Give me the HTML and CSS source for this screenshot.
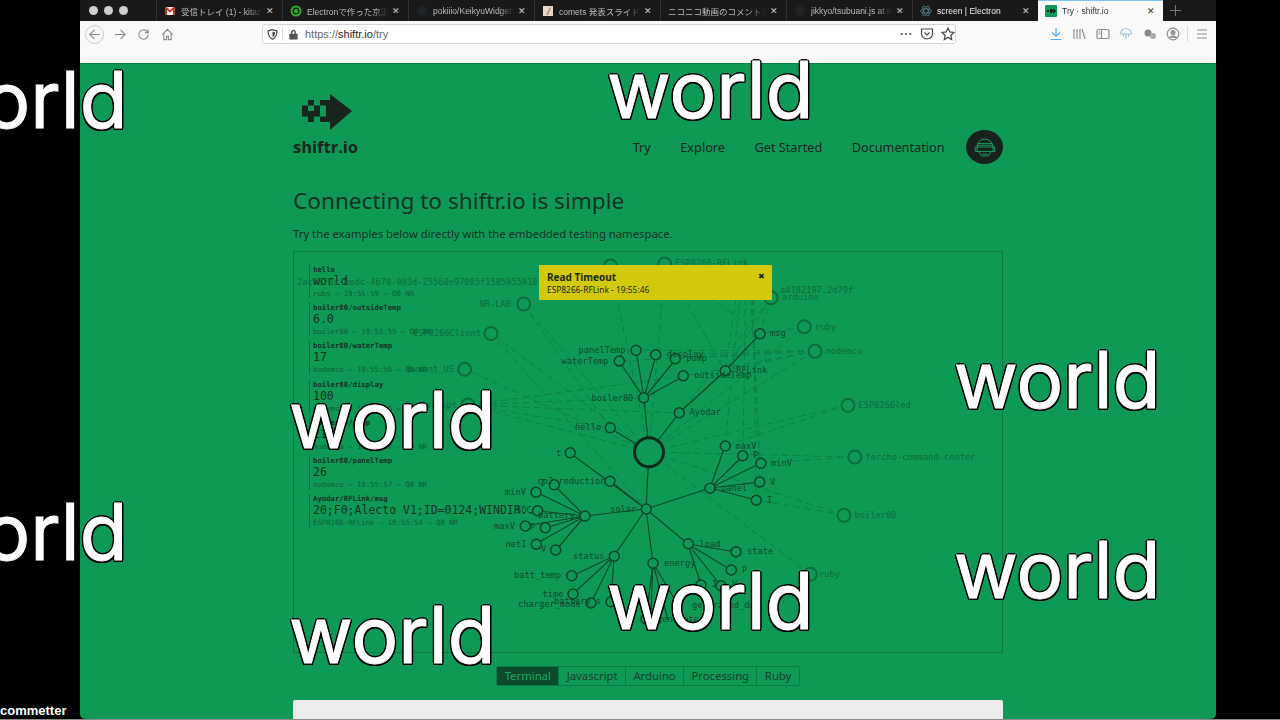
FILE: index.html
```html
<!DOCTYPE html>
<html lang="en">
<head>
  <meta charset="UTF-8">
  <title>Try · shiftr.io</title>
  <link rel="stylesheet" href="styles.css">
</head>
<body>
  <div class="window">
    <!-- tab strip -->
    <div class="tabstrip">
      <div class="lights"><span></span><span></span><span></span></div>
      <div class="tab">
        <svg class="favicon" viewBox="0 0 12 12"><rect x="1" y="2" width="10" height="8" fill="#eee"/><path d="M1 2v8h2V5l3 2.500L9 5v5h2V2H9.500L6 5 2.500 2z" fill="#c5392c"/></svg>
        <span class="tab-title">受信トレイ (1) - kitazaki</span><span class="tab-close">✕</span>
      </div>
      <div class="tab">
        <svg class="favicon" viewBox="0 0 12 12"><circle cx="6" cy="6" r="5.500" fill="#35a82c"/><circle cx="6" cy="6" r="2.800" fill="none" stroke="#111" stroke-width="1.200"/></svg>
        <span class="tab-title">Electronで作った京浜急行</span><span class="tab-close">✕</span>
      </div>
      <div class="tab">
        <svg class="favicon" viewBox="0 0 12 12"><circle cx="6" cy="6" r="5" fill="#1f2328"/></svg>
        <span class="tab-title">pokiiio/KeikyuWidget: A</span><span class="tab-close">✕</span>
      </div>
      <div class="tab">
        <svg class="favicon" viewBox="0 0 12 12"><rect x="1" y="1" width="10" height="10" fill="#e8d9cf"/><path d="M4 10 8 2l1 1-3 7z" fill="#c08a78"/></svg>
        <span class="tab-title">comets 発表スライド用の</span><span class="tab-close">✕</span>
      </div>
      <div class="tab tab-nofav">
        <span class="tab-title">ニコニコ動画のコメントを見</span><span class="tab-close">✕</span>
      </div>
      <div class="tab">
        <svg class="favicon" viewBox="0 0 12 12"><circle cx="6" cy="6" r="5" fill="#1f2328"/></svg>
        <span class="tab-title">jikkyo/tsubuani.js at ma</span><span class="tab-close">✕</span>
      </div>
      <div class="tab tab-loud">
        <svg class="favicon" viewBox="0 0 12 12" fill="none" stroke="#5d8f9c" stroke-width=".7"><ellipse cx="6" cy="6" rx="5.500" ry="2.200"/><ellipse cx="6" cy="6" rx="5.500" ry="2.200" transform="rotate(60 6 6)"/><ellipse cx="6" cy="6" rx="5.500" ry="2.200" transform="rotate(120 6 6)"/></svg>
        <span class="tab-title">screen | Electron</span><span class="tab-close">✕</span>
      </div>
      <div class="tab tab-active">
        <svg class="favicon" viewBox="0 0 12 12"><rect width="12" height="12" rx="1" fill="#0f9956"/><path d="M2 5h2v2H2zM5 4h2v1h1V3l3 3-3 3V7H7v1H5z" fill="#16261c"/></svg>
        <span class="tab-title">Try · shiftr.io</span><span class="tab-close">✕</span>
      </div>
      <div class="newtab">
        <svg viewBox="0 0 11 11" width="11" height="11"><path d="M5.500 0v11M0 5.500h11" stroke="#777" stroke-width="1"/></svg>
      </div>
    </div>

    <!-- toolbar -->
    <div class="toolbar">
      <div class="tools">
        <span class="backbtn">
          <svg viewBox="0 0 14 14" width="13" height="13" class="ico"><path d="M13 7H2M7 2 2 7l5 5"/></svg>
        </span>
        <svg viewBox="0 0 14 14" width="13" height="13" class="ico"><path d="M1 7h11M7 2l5 5-5 5"/></svg>
        <svg viewBox="0 0 14 14" width="13" height="13" class="ico ico-reload"><path d="M12 7a5 5 0 1 1-1.500-3.500L12 5V1.500M12 5H8.500"/></svg>
        <svg viewBox="0 0 14 14" width="13" height="13" class="ico ico-home"><path d="M1.500 7 7 1.500 12.500 7M3 6v6.500h3V9h2v3.500h3V6"/></svg>
      </div>
      <div class="urlbar">
        <svg viewBox="0 0 12 12" width="11" height="11" class="url-shield"><path d="M6 .8 10.800 2c0 4.800-1.200 7.600-4.800 9.200C2.400 9.600 1.200 6.800 1.200 2z" fill="none" stroke="#444" stroke-width="1.300"/><path d="M6 3 8.800 3.600C8.700 6.200 8 8 6 9z" fill="#444"/></svg>
        <span class="url-sep"></span>
        <svg viewBox="0 0 12 12" width="11" height="11" class="url-lock"><path d="M2 5.500h8V11H2zM3.800 5.500V3.500a2.200 2.200 0 0 1 4.400 0v2" fill="#555" stroke="#555"/><path d="M5 5.500V3.500a1 1 0 0 1 2 0v2" fill="#fff"/></svg>
        <span class="url-text">https://<b>shiftr.io</b>/try</span>
        <span class="url-end">
          <svg viewBox="0 0 14 4" width="12" height="4"><circle cx="2" cy="2" r="1.300" fill="#555"/><circle cx="7" cy="2" r="1.300" fill="#555"/><circle cx="12" cy="2" r="1.300" fill="#555"/></svg>
          <svg viewBox="0 0 14 14" width="14" height="14" class="ico ico-dark"><path d="M1.500 2h11v4.500a5.500 5.500 0 0 1-11 0zM4.500 5.500 7 8l2.500-2.500"/></svg>
          <svg viewBox="0 0 14 14" width="14" height="14" class="ico ico-dark"><path d="m7 1 1.800 3.900 4.200.5-3.100 2.900.8 4.200L7 10.400l-3.700 2.100.8-4.200L1 5.400l4.200-.5z"/></svg>
        </span>
      </div>
      <div class="tools tools-right">
        <svg viewBox="0 0 14 14" width="14" height="14" class="ico ico-blue"><path d="M7 1v8M3 5.500 7 9.500l4-4M1.500 12.500h11"/></svg>
        <svg viewBox="0 0 14 14" width="14" height="14" class="ico"><path d="M2 2v10M5 2v10M8 2v10M10 2l3 10"/></svg>
        <svg viewBox="0 0 14 14" width="14" height="14" class="ico"><rect x="1" y="2.500" width="12" height="9" rx="1.500"/><path d="M5.500 2.500v9M2.500 5H4M2.500 7H4"/></svg>
        <svg viewBox="0 0 14 14" width="14" height="14" class="ico ico-pale"><path d="M1.500 7a5.500 5.500 0 0 1 11 0zM4.500 7v3M7 7v5M9.500 7v3"/></svg>
        <svg viewBox="0 0 14 14" width="14" height="14"><circle cx="5" cy="6" r="3.500" fill="#888"/><circle cx="10" cy="9" r="3" fill="#aaa"/></svg>
        <svg viewBox="0 0 14 14" width="14" height="14" class="ico"><circle cx="7" cy="7" r="5.800"/><circle cx="7" cy="5.500" r="2" fill="#999"/><path d="M3.500 11c1-2.500 6-2.500 7 0" fill="#999"/></svg>
        <span class="tool-sep"></span>
        <svg viewBox="0 0 14 14" width="14" height="14" class="ico"><path d="M2 3h10M2 7h10M2 11h10"/></svg>
      </div>
    </div>

    <!-- page -->
    <main class="page">
      <div class="content">
        <header class="site-header">
          <div class="brand">
            <svg class="logo" viewBox="302 94 50 36" width="50" height="36">
              <path d="M330 94l22 17-22 19zM308 100h6v5.500h-6zM320 100h10v5.500h-10zM302 105.500h6v5.500h-6zM314 105.500h6v5.500h-6zM326 105.500h4v5.500h-4zM302 111h18v5.500h-18zM326 111h4v5.500h-4zM308 116.500h6v5.500h-6zM320 116.500h10v5.500h-10z" fill="#16261c"/>
            </svg>
            <div class="brand-name">shiftr.io</div>
          </div>
          <nav class="nav">
            <a>Try</a>
            <a>Explore</a>
            <a>Get Started</a>
            <a>Documentation</a>
            <span class="avatar">
              <svg viewBox="0 0 36 36" width="34" height="32" fill="none" stroke="#1aa862" stroke-width="1">
                <path d="M9 18a9 9 0 0 1 18 0M9 18h18v5H9zM10 14h16M9.500 16h17M11 23l3 5h8l3-5M15 26h6"/>
                <path d="M9 18H7v5h2M27 18h2v5h-2"/>
              </svg>
            </span>
          </nav>
        </header>

        <h1>Connecting to shiftr.io is simple</h1>
        <p class="lead">Try the examples below directly with the embedded testing namespace.</p>

        <div class="graph">
          <svg class="graph-svg" viewBox="293 252 708 400" width="708" height="400">
            <!-- connections between clients and topics -->
            <g class="link-dim">
              <path d="M648 452 522 304M648 452 490 333M648 452 464 369M648 452 467 405M648 452 664 264M648 452 609 265M648 452 770 298M648 452 803 327M648 452 814 351M648 452 847 405M648 452 854 457M648 452 843 515"/>
              <path d="M467 405 643 398M467 405 678 413M467 405 609 428M467 405 683 376"/>
              <path d="M814 351 635 350M814 351 655 355M814 351 675 359M814 351 618 361M814 351 683 376M814 351 724 371"/>
              <path d="M664 264 724 371M664 264 759 334M745 265 742 456M742 265 724 446M748 265 759 463M750 265 759 482M752 265 755 500M740 265 724 371"/>
              <path d="M770 298 759 334M770 298 724 371M803 327 759 334"/>
              <path d="M522 304 609 428M490 333 645 509M847 405 724 446M854 457 760 463M843 515 755 500M809 574 648 452"/>
            </g>
            <!-- topic tree -->
            <g class="link">
              <path d="M648 452 643 398M648 452 609 428M648 452 678 413M678 413 724 371 759 334"/>
              <path d="M643 398 635 350M643 398 655 355M643 398 675 359M643 398 618 361M643 398 683 376"/>
              <path d="M648 452 645 509M645 509 569 453M645 509 609 481M645 509 709 488M645 509 584 516M645 509 613 556M645 509 652 563M645 509 687 544"/>
              <path d="M709 488 724 446M709 488 742 456M709 488 760 463M709 488 759 482M709 488 755 500"/>
              <path d="M584 516 553 485M584 516 535 492M584 516 537 511M584 516 524 526M584 516 544 528M584 516 535 544M584 516 555 550"/>
              <path d="M613 556 571 576M613 556 572 594M613 556 590 603M613 556 610 602"/>
              <path d="M652 563 645 619M652 563 650 610M652 563 667 620M652 563 680 610"/>
              <path d="M687 544 735 552M687 544 730 570M687 544 700 585M687 544 720 586"/>
            </g>
            <!-- clients -->
            <g class="node-dim">
              <circle cx="522.700" cy="304" r="6.500"/>
              <circle cx="490" cy="333.500" r="6.500"/>
              <circle cx="463.700" cy="369.300" r="6.500"/>
              <circle cx="467" cy="405" r="6.500"/>
              <circle cx="609.500" cy="266" r="6.500"/>
              <circle cx="663.700" cy="264" r="6.500"/>
              <circle cx="770" cy="297.700" r="6.500"/>
              <circle cx="803.300" cy="326.700" r="6.500"/>
              <circle cx="814" cy="351.300" r="6.500"/>
              <circle cx="847" cy="405.300" r="6.500"/>
              <circle cx="853.800" cy="457" r="6.500"/>
              <circle cx="843" cy="515.300" r="6.500"/>
              <circle cx="809.300" cy="574.300" r="6.500"/>
            </g>
            <g class="label-dim">
              <text x="510" y="306.500" text-anchor="end">NR-LAB</text>
              <text x="480" y="336" text-anchor="end">ESP8266Client</text>
              <text x="453" y="372" text-anchor="end">bwaant_US</text>
              <text x="456" y="408" text-anchor="end">Javascript</text>
              <text x="296" y="284.500">2ac48f3c-6edc-4670-983d-25560e97085f1585855818</text>
              <text x="674" y="266">ESP8266-RFLink</text>
              <text x="779" y="293">a4182197.2d79f</text>
              <text x="781" y="300">arduino</text>
              <text x="814" y="329.500">ruby</text>
              <text x="824.500" y="354">nodemcu</text>
              <text x="857.500" y="408">ESP8266led</text>
              <text x="864.500" y="459.500">fercho-command-center</text>
              <text x="853.500" y="518">boiler80</text>
              <text x="818" y="576.500">ruby</text>
            </g>
            <!-- topics -->
            <circle class="node-root" cx="648" cy="452.300" r="14.500"/>
            <g class="node">
              <circle cx="642.700" cy="397.700" r="5"/>
              <circle cx="635" cy="350.300" r="5"/>
              <circle cx="654.700" cy="354.700" r="5"/>
              <circle cx="674.300" cy="358.700" r="5"/>
              <circle cx="618.300" cy="361" r="5"/>
              <circle cx="682.300" cy="375.700" r="5"/>
              <circle cx="724.300" cy="370.700" r="5"/>
              <circle cx="759" cy="333.700" r="5"/>
              <circle cx="678.300" cy="412.700" r="5"/>
              <circle cx="609.300" cy="427.700" r="5"/>
              <circle cx="569.300" cy="452.700" r="5"/>
              <circle cx="609" cy="481.300" r="5"/>
              <circle cx="645.300" cy="509" r="5"/>
              <circle cx="709" cy="488.300" r="5"/>
              <circle cx="724.300" cy="446" r="5"/>
              <circle cx="741.700" cy="455.700" r="5"/>
              <circle cx="760" cy="463.300" r="5"/>
              <circle cx="758.700" cy="482" r="5"/>
              <circle cx="755.300" cy="500.300" r="5"/>
              <circle cx="584" cy="516" r="5"/>
              <circle cx="553.300" cy="484.700" r="5"/>
              <circle cx="535" cy="492.300" r="5"/>
              <circle cx="536.700" cy="510.700" r="5"/>
              <circle cx="524.300" cy="526" r="5"/>
              <circle cx="544.300" cy="527.700" r="5"/>
              <circle cx="535.300" cy="544.300" r="5"/>
              <circle cx="554.700" cy="550" r="5"/>
              <circle cx="613.300" cy="556.300" r="5"/>
              <circle cx="570.700" cy="575.700" r="5"/>
              <circle cx="572" cy="594" r="5"/>
              <circle cx="590" cy="603" r="5"/>
              <circle cx="610" cy="601.700" r="5"/>
              <circle cx="652" cy="563.300" r="5"/>
              <circle cx="687.300" cy="543.700" r="5"/>
              <circle cx="735" cy="551.700" r="5"/>
              <circle cx="730.300" cy="570" r="5"/>
              <circle cx="700" cy="585" r="5"/>
              <circle cx="720" cy="585.700" r="5"/>
              <circle cx="645" cy="619" r="5"/>
            </g>
            <g class="label">
              <text x="590.500" y="400.500">boiler80</text>
              <text x="577.500" y="353">panelTemp</text>
              <text x="560.500" y="363.500">waterTemp</text>
              <text x="666" y="356.500">display</text>
              <text x="685" y="361">pump</text>
              <text x="693" y="378">outsideTemp</text>
              <text x="735" y="373">RFLink</text>
              <text x="769" y="335.500">msg</text>
              <text x="688.500" y="415">Ayodar</text>
              <text x="574" y="430">hello</text>
              <text x="555" y="455.500">t</text>
              <text x="536.500" y="484">co2 reduction</text>
              <text x="609" y="511.500">solar</text>
              <text x="720" y="490.500">panel</text>
              <text x="734.500" y="449">maxV</text>
              <text x="752" y="458">P</text>
              <text x="770" y="465.500">minV</text>
              <text x="769" y="484.500">V</text>
              <text x="766" y="503">I</text>
              <text x="537" y="518">battery</text>
              <text x="539" y="486">I</text>
              <text x="504" y="495">minV</text>
              <text x="515" y="513">SOC</text>
              <text x="493" y="528.500">maxV</text>
              <text x="529" y="530">P</text>
              <text x="504.500" y="547">netI</text>
              <text x="540" y="552">V</text>
              <text x="572" y="558.500">status</text>
              <text x="513" y="578">batt_temp</text>
              <text x="541.500" y="597">time</text>
              <text x="517" y="606.500">charger_mode</text>
              <text x="553" y="604">battery_s</text>
              <text x="663" y="566">energy</text>
              <text x="698.500" y="546.500">load</text>
              <text x="746" y="554">state</text>
              <text x="741" y="572.500">P</text>
              <text x="711" y="587">I</text>
              <text x="731" y="587">V</text>
              <text x="691" y="608">generated_da</text>
              <text x="656" y="621.500">generated</text>
            </g>
          </svg>

          <!-- incoming messages -->
          <div class="feed">
            <div class="msg"><div class="msg-topic">hello</div><div class="msg-value">world</div><div class="msg-meta">ruby – 19:55:59 – Q0 NR</div></div>
            <div class="msg"><div class="msg-topic">boiler80/outsideTemp</div><div class="msg-value">6.0</div><div class="msg-meta">boiler80 – 19:55:55 – Q0 NR</div></div>
            <div class="msg"><div class="msg-topic">boiler80/waterTemp</div><div class="msg-value">17</div><div class="msg-meta">nodemcu – 19:55:56 – Q0 NR</div></div>
            <div class="msg"><div class="msg-topic">boiler80/display</div><div class="msg-value">100</div><div class="msg-meta">nodemcu – 19:55:56 – Q0 NR</div></div>
            <div class="msg"><div class="msg-topic">boiler80/pump</div><div class="msg-value">21</div><div class="msg-meta">nodemcu – 19:55:57 – Q0 NR</div></div>
            <div class="msg"><div class="msg-topic">boiler80/panelTemp</div><div class="msg-value">26</div><div class="msg-meta">nodemcu – 19:55:57 – Q0 NR</div></div>
            <div class="msg"><div class="msg-topic">Ayodar/RFLink/msg</div><div class="msg-value">20;F0;Alecto V1;ID=0124;WINDIR..</div><div class="msg-meta">ESP8266-RFLink – 19:55:54 – Q0 NR</div></div>
          </div>

          <div class="toast">
            <span class="toast-close">✖</span>
            <div class="toast-title">Read Timeout</div>
            <div class="toast-text">ESP8266-RFLink - 19:55:46</div>
          </div>
        </div>

        <div class="tabs">
          <span class="tabs-item tabs-on">Terminal</span>
          <span class="tabs-item">Javascript</span>
          <span class="tabs-item">Arduino</span>
          <span class="tabs-item">Processing</span>
          <span class="tabs-item">Ruby</span>
        </div>

        <div class="codebox"></div>
      </div>
    </main>
  </div>

  <!-- floating comments on top of everything -->
  <div class="danmaku d1">world</div>
  <div class="danmaku d2">world</div>
  <div class="danmaku d3">world</div>
  <div class="danmaku d4">world</div>
  <div class="danmaku d5">world</div>
  <div class="danmaku d6">world</div>
  <div class="danmaku d7">world</div>
  <div class="danmaku d8">world</div>
  <div class="caption">commetter</div>
</body>
</html>
```

FILE: styles.css
```css
html, body {
  height: 100%;
  margin: 0;
  padding: 0;
  background: #000;
  font-family: "Noto Sans", sans-serif;
  overflow: hidden;
}
body {
  box-sizing: border-box;
  border-bottom: 1px solid #8a8a8a;
}
.window {
  display: flex;
  flex-direction: column;
  width: 1136px;
  height: 719px;
  margin-left: 80px;
  border-radius: 0 0 5px 5px;
  overflow: hidden;
}

/* tab strip */
.tabstrip {
  display: flex;
  height: 21px;
  background: #191919;
  color: #bbb;
  font-size: 8.500px;
  font-family: "Liberation Sans", "Noto Sans CJK JP", sans-serif;
  flex: none;
}
.lights {
  display: flex;
  gap: 6px;
  width: 76px;
  padding: 6px 0 0 9px;
  box-sizing: border-box;
}
.lights span {
  width: 9px;
  height: 9px;
  border-radius: 50%;
  background: #cfcfcf;
}
.tab {
  display: flex;
  align-items: center;
  width: 126px;
  padding: 0 7px;
  box-sizing: border-box;
  border-left: 1px solid #333;
  flex: none;
}
.favicon {
  width: 12px;
  height: 12px;
  margin-right: 5px;
  flex: none;
}
.tab-title {
  flex: 1;
  white-space: nowrap;
  overflow: hidden;
  -webkit-mask-image: linear-gradient(to right, #000 82%, transparent);
  mask-image: linear-gradient(to right, #000 82%, transparent);
}
.tab-close {
  width: 10px;
  margin-left: 3px;
  font-size: 9px;
  color: #ccc;
  text-align: center;
}
.tab-loud .tab-title {
  color: #eee;
}
.tab-active {
  background: #f9f9fa;
  color: #333;
  border-left: 0;
  border-top: 1px solid #7dc8f5;
  width: 125px;
}
.tab-active .tab-close {
  color: #333;
}
.newtab {
  display: flex;
  align-items: center;
  padding-left: 7px;
}

/* toolbar */
.toolbar {
  display: flex;
  align-items: flex-start;
  height: 42px;
  background: #f9f9fa;
  flex: none;
  box-sizing: border-box;
  padding-top: 3px;
}
.tools {
  display: flex;
  align-items: center;
  gap: 10.500px;
  height: 20px;
  width: 182px;
  padding-left: 5px;
  box-sizing: border-box;
}
.tools-right {
  flex: 1;
  width: auto;
  gap: 9.500px;
  padding-left: 0;
  justify-content: flex-end;
  padding-right: 7px;
}
.backbtn {
  display: flex;
  align-items: center;
  justify-content: center;
  width: 19px;
  height: 19px;
  border: 1px solid #ccc;
  border-radius: 50%;
  box-sizing: border-box;
  margin-right: -1px;
}
.ico {
  fill: none;
  stroke: #8e8e90;
  stroke-width: 1.200;
}
.ico-dark {
  stroke: #444;
}
.ico-blue {
  stroke: #57a9ec;
}
.ico-pale {
  stroke: #a6c6d8;
}
.tool-sep {
  width: 1px;
  height: 16px;
  background: #ddd;
  margin: 0 -2px 0 -3px;
}
.urlbar {
  display: flex;
  align-items: center;
  width: 694px;
  height: 20px;
  background: #fff;
  border: 1px solid #d4d4d4;
  border-radius: 3px;
  box-sizing: border-box;
  padding: 0 0 0 4px;
  font-family: "Liberation Sans", sans-serif;
  font-size: 11px;
  color: #666;
  margin-right: 6px;
}
.url-sep {
  width: 1px;
  height: 14px;
  background: #ddd;
  margin: 0 5px 0 4px;
}
.url-text {
  margin-left: 6px;
  flex: 1;
}
.url-text b {
  font-weight: 400;
  color: #222;
}
.url-end {
  display: flex;
  align-items: center;
  gap: 7.500px;
}

/* page */
.page {
  flex: 1;
  background: #0f9956;
  border-top: 1px solid #0c7f47;
  min-height: 0;
}
.content {
  width: 710px;
  margin-left: 213px;
  color: #12331f;
}
.site-header {
  display: flex;
  justify-content: space-between;
  align-items: flex-start;
  height: 96px;
  padding-top: 30px;
  box-sizing: border-box;
}
.brand-name {
  font-family: "Open Sans", sans-serif;
  font-weight: 700;
  font-size: 16.500px;
  line-height: 20px;
  color: #16261c;
  margin-top: 7px;
}
.logo {
  display: block;
  margin-left: 9px;
}
.nav {
  display: flex;
  align-items: center;
  gap: 29.500px;
  font-size: 12.700px;
  color: #16261c;
  margin-top: 36px;
}
.avatar {
  display: flex;
  width: 37px;
  height: 34px;
  border-radius: 50%;
  background: #16221b;
  align-items: center;
  justify-content: center;
  margin-left: -8px;
}
h1 {
  margin: 26px 0 0;
  font-size: 22.600px;
  line-height: 30px;
  font-weight: 400;
  color: #12331f;
}
.lead {
  margin: 10px 0 0;
  font-size: 11.300px;
  line-height: 16px;
}
.graph {
  position: relative;
  height: 400px;
  margin-top: 9px;
  border: 1px solid #0c7a45;
  width: 708px;
}
.graph-svg {
  display: block;
  font-family: "DejaVu Sans Mono", monospace;
  font-size: 8.700px;
}
.link-dim path {
  fill: none;
  stroke: #0c8149;
  stroke-width: 1;
  stroke-dasharray: 7 4;
}
.link path {
  fill: none;
  stroke: #0d4a2a;
  stroke-width: 1.200;
}
.node-dim circle {
  fill: #0f9956;
  stroke: #0b6c3c;
  stroke-width: 2;
}
.node circle {
  fill: #0f9956;
  stroke: #0e4427;
  stroke-width: 1.500;
}
.node-root {
  fill: #0f9956;
  stroke: #0e2a1a;
  stroke-width: 3;
}
.label-dim text {
  fill: #0b6c3c;
}
.label text {
  fill: #0e4a2a;
}
.feed {
  position: absolute;
  top: 13px;
  left: 15px;
  display: flex;
  flex-direction: column;
  gap: 5.200px;
  font-family: "DejaVu Sans Mono", monospace;
}
.msg {
  border-left: 1px solid #0c6e3d;
  padding-left: 3px;
  height: 33px;
  white-space: nowrap;
}
.msg-topic {
  font-size: 7.300px;
  font-weight: 700;
  line-height: 10px;
  color: #12331f;
}
.msg-value {
  font-size: 11.500px;
  line-height: 13px;
  color: #12331f;
}
.msg-meta {
  font-size: 7.300px;
  line-height: 11px;
  color: #0a5f35;
}
.toast {
  position: absolute;
  top: 13px;
  left: 245px;
  width: 233px;
  height: 35px;
  background: #d4c80d;
  box-sizing: border-box;
  padding: 6px 8px;
  color: #1c2a12;
}
.toast-title {
  font-size: 10px;
  font-weight: 700;
  line-height: 12px;
}
.toast-text {
  font-size: 8.400px;
  line-height: 11px;
  margin-top: 1px;
}
.toast-close {
  position: absolute;
  top: 6px;
  right: 7px;
  font-size: 8px;
  line-height: 10px;
}
.tabs {
  display: flex;
  justify-content: center;
  margin-top: 13px;
}
.tabs-item {
  height: 18px;
  line-height: 18px;
  padding: 0 7.400px;
  font-size: 11.300px;
  color: #12432a;
  border: 1px solid #0c7a45;
  border-left-width: 0;
}
.tabs-item:first-child {
  border-left-width: 1px;
  border-radius: 2px 0 0 2px;
}
.tabs-item:last-child {
  border-radius: 0 2px 2px 0;
}
.tabs-on {
  background: #0b4a2b;
  color: #1aa862;
}
.codebox {
  height: 40px;
  margin-top: 14px;
  background: #ececec;
  border-radius: 2px 2px 0 0;
}

/* overlay comments */
.danmaku {
  position: absolute;
  font-family: Inter, "Liberation Sans", sans-serif;
  font-size: 78px;
  line-height: 84px;
  color: #fff;
  -webkit-text-stroke: 1px #fff;
  text-shadow: 2px 0 0 #000, -2px 0 0 #000, 0 2px 0 #000, 0 -2px 0 #000, 1.500px 1.500px 0 #000, -1.500px 1.500px 0 #000, 1.500px -1.500px 0 #000, -1.500px -1.500px 0 #000;
}
.d1 { left: -79px; top: 58px; }
.d2 { left: 607px; top: 48px; }
.d3 { left: 954px; top: 338px; }
.d4 { left: 289px; top: 378px; }
.d5 { left: -79px; top: 490px; }
.d6 { left: 954px; top: 528px; }
.d7 { left: 607px; top: 559px; }
.d8 { left: 289px; top: 593px; }
.caption {
  position: absolute;
  left: 0;
  top: 703px;
  font-family: "Liberation Sans", sans-serif;
  font-weight: 700;
  font-size: 13px;
  line-height: 16px;
  color: #fff;
}
```
